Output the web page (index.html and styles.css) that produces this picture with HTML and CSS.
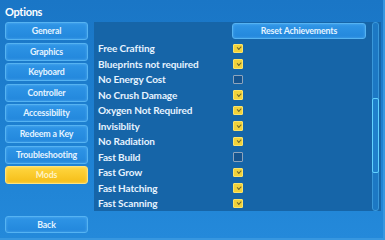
FILE: index.html
```html
<!DOCTYPE html>
<html>
<head>
<meta charset="utf-8">
<link rel="stylesheet" href="styles.css">
</head>
<body>
<div class="window">
  <div class="title">Options</div>
  <div class="main">
    <div class="tabs">
      <div class="btn">General</div>
      <div class="btn">Graphics</div>
      <div class="btn">Keyboard</div>
      <div class="btn">Controller</div>
      <div class="btn">Accessibility</div>
      <div class="btn">Redeem a Key</div>
      <div class="btn">Troubleshooting</div>
      <div class="btn active">Mods</div>
      <div class="btn back">Back</div>
    </div>
    <div class="panel">
      <div class="content">
        <div class="top-row">
          <div class="btn reset">Reset Achievements</div>
        </div>
        <div class="rows">
          <div class="row"><span class="label">Free Crafting</span><span class="box on"></span></div>
          <div class="row"><span class="label">Blueprints not required</span><span class="box on"></span></div>
          <div class="row"><span class="label">No Energy Cost</span><span class="box"></span></div>
          <div class="row"><span class="label">No Crush Damage</span><span class="box on"></span></div>
          <div class="row"><span class="label">Oxygen Not Required</span><span class="box on"></span></div>
          <div class="row"><span class="label">Invisiblity</span><span class="box on"></span></div>
          <div class="row"><span class="label">No Radiation</span><span class="box on"></span></div>
          <div class="row"><span class="label">Fast Build</span><span class="box"></span></div>
          <div class="row"><span class="label">Fast Grow</span><span class="box on"></span></div>
          <div class="row"><span class="label">Fast Hatching</span><span class="box on"></span></div>
          <div class="row"><span class="label">Fast Scanning</span><span class="box on"></span></div>
        </div>
      </div>
      <div class="scrollbar"><div class="thumb"></div></div>
    </div>
  </div>
</div>
</body>
</html>
```
FILE: styles.css
```css
html, body {
  margin: 0;
  padding: 0;
  width: 385px;
  height: 240px;
  overflow: hidden;
  background: #1b7bcc;
  font-family: "Lato", "Open Sans", sans-serif;
}
.window {
  box-sizing: border-box;
  width: 385px;
  height: 240px;
  background: linear-gradient(#1a76c6, #1e81d2 60%, #2489da);
  border-right: 2px solid #3797e0;
  border-bottom: 2px solid #3797e0;
  padding: 0 0 0 5px;
  display: flex;
  flex-direction: column;
}
.title {
  height: 22px;
  line-height: 23px;
  color: #ffffff;
  font-weight: 700;
  font-size: 11px;
  letter-spacing: -0.3px;
}
.main {
  display: flex;
  gap: 6px;
  align-items: flex-start;
}
.tabs {
  width: 83px;
  height: 211px;
  display: flex;
  flex-direction: column;
  gap: 2.6px;
}
.btn {
  box-sizing: border-box;
  height: 18px;
  border: 1px solid #55b3f2;
  border-radius: 3px;
  background: linear-gradient(#2f95e6, #2287dc);
  box-shadow: inset 0 0 3px rgba(120, 200, 255, 0.5);
  color: #e4f3ff;
  font-size: 8.8px;
  font-weight: 700;
  letter-spacing: -0.15px;
  text-align: center;
  line-height: 16px;
}
.btn.active {
  background: linear-gradient(#ffd640, #f5bd17);
  border-color: #ffe27a;
  box-shadow: inset 0 0 3px rgba(255, 240, 160, 0.6);
  color: #fff3c4;
}
.btn.back {
  margin-top: auto;
  height: 17px;
  line-height: 15px;
}
.panel {
  width: 287px;
  height: 189px;
  background: #1665a8;
  display: flex;
}
.content {
  box-sizing: border-box;
  padding-left: 4px;
  width: 278px;
}
.top-row {
  padding: 1px 0 0 134px;
  height: 18.5px;
  box-sizing: border-box;
}
.btn.reset {
  width: 134px;
  height: 16px;
  line-height: 14px;
}
.rows {
  display: flex;
  flex-direction: column;
}
.row {
  height: 15.5px;
  display: grid;
  grid-template-columns: 135px 10px;
  align-items: center;
}
.label {
  color: #e6f3ff;
  font-size: 10px;
  font-weight: 700;
  letter-spacing: -0.1px;
}
.box {
  box-sizing: border-box;
  width: 9.5px;
  height: 9.5px;
  border: 1px solid #8ea4bc;
  border-radius: 1px;
  background: #15548f;
  position: relative;
}
.box.on {
  background: #f2d23a;
  border-color: #fbe36a;
}
.box.on::after {
  content: "";
  position: absolute;
  left: 2.5px;
  top: 1.5px;
  width: 3px;
  height: 1.5px;
  border-left: 1px solid #6b6530;
  border-bottom: 1px solid #6b6530;
  transform: rotate(-45deg);
}
.scrollbar {
  box-sizing: border-box;
  width: 7px;
  height: 189px;
  border: 1px solid #3a98da;
  border-radius: 3px;
  background: #1c78c4;
  position: relative;
}
.thumb {
  position: absolute;
  left: -1px;
  right: -1px;
  top: 75px;
  height: 75px;
  box-sizing: border-box;
  border: 1px solid #62d2ff;
  border-radius: 2px;
  background: #1f80cc;
}
```
